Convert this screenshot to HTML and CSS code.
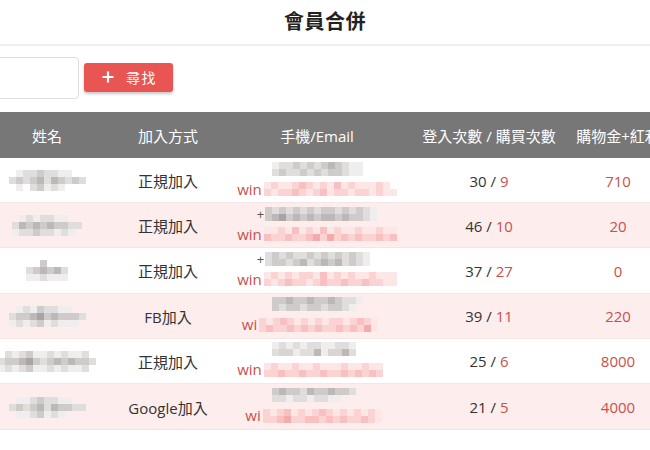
FILE: index.html
```html
<!DOCTYPE html>
<html lang="zh-Hant">
<head>
<meta charset="utf-8">
<title>會員合併</title>
<link rel="stylesheet" href="styles.css">
</head>
<body>
<header class="title-bar"><h1 class="title">會員合併</h1></header>
<div class="content">
  <div class="toolbar">
    <div class="search-input"></div>
    <button class="btn-find" type="button">
      <svg class="plus" width="12" height="12" viewBox="0 0 12 12"><path d="M6 0.5V11.5M0.5 6H11.5" stroke="#fff" stroke-width="2.2" fill="none"/></svg>
      <span>尋找</span>
    </button>
  </div>
  <div class="table">
    <div class="row head">
      <div class="cell">姓名</div>
      <div class="cell">加入方式</div>
      <div class="cell">手機/Email</div>
      <div class="cell">登入次數 / 購買次數</div>
      <div class="cell nowrap">購物金+紅利</div>
    </div>

    <div class="row">
      <div class="cell"><div class="mz c11"><i class="o"></i><i class="a"></i><i class="b"></i><i class="b"></i><i class="c"></i><i class="b"></i><i class="b"></i><i class="a"></i><i class="a"></i><i class="o"></i><i class="o"></i><i class="b"></i><i class="c"></i><i class="b"></i><i class="c"></i><i class="d"></i><i class="b"></i><i class="d"></i><i class="c"></i><i class="b"></i><i class="c"></i><i class="b"></i><i class="o"></i><i class="a"></i><i class="o"></i><i class="b"></i><i class="c"></i><i class="a"></i><i class="b"></i><i class="a"></i><i class="o"></i><i class="o"></i><i class="o"></i></div></div>
      <div class="cell">正規加入</div>
      <div class="cell contact">
        <div class="line"><div class="mz c13"><i class="a"></i><i class="b"></i><i class="b"></i><i class="c"></i><i class="b"></i><i class="c"></i><i class="b"></i><i class="c"></i><i class="d"></i><i class="c"></i><i class="b"></i><i class="a"></i><i class="a"></i><i class="b"></i><i class="c"></i><i class="b"></i><i class="b"></i><i class="c"></i><i class="b"></i><i class="c"></i><i class="b"></i><i class="c"></i><i class="c"></i><i class="b"></i><i class="a"></i><i class="a"></i></div></div>
        <div class="line"><span class="win">win</span><div class="mz c19 pk"><i class="p"></i><i class="q"></i><i class="p"></i><i class="p"></i><i class="q"></i><i class="r"></i><i class="q"></i><i class="p"></i><i class="q"></i><i class="p"></i><i class="r"></i><i class="p"></i><i class="q"></i><i class="p"></i><i class="p"></i><i class="p"></i><i class="q"></i><i class="p"></i><i class="o"></i><i class="q"></i><i class="p"></i><i class="q"></i><i class="q"></i><i class="r"></i><i class="q"></i><i class="p"></i><i class="q"></i><i class="r"></i><i class="p"></i><i class="q"></i><i class="q"></i><i class="p"></i><i class="q"></i><i class="q"></i><i class="p"></i><i class="q"></i><i class="p"></i><i class="p"></i></div></div>
      </div>
      <div class="cell">30 /&nbsp;<span class="red">9</span></div>
      <div class="cell red">710</div>
    </div>

    <div class="row pink">
      <div class="cell"><div class="mz c10"><i class="o"></i><i class="a"></i><i class="b"></i><i class="a"></i><i class="b"></i><i class="b"></i><i class="a"></i><i class="a"></i><i class="o"></i><i class="o"></i><i class="b"></i><i class="d"></i><i class="c"></i><i class="d"></i><i class="c"></i><i class="d"></i><i class="c"></i><i class="c"></i><i class="b"></i><i class="b"></i><i class="a"></i><i class="b"></i><i class="b"></i><i class="c"></i><i class="b"></i><i class="b"></i><i class="a"></i><i class="b"></i><i class="a"></i><i class="o"></i></div></div>
      <div class="cell">正規加入</div>
      <div class="cell contact">
        <div class="line"><span class="plus-t">+</span><div class="mz c16"><i class="c"></i><i class="b"></i><i class="c"></i><i class="b"></i><i class="c"></i><i class="b"></i><i class="c"></i><i class="b"></i><i class="c"></i><i class="c"></i><i class="b"></i><i class="c"></i><i class="b"></i><i class="c"></i><i class="b"></i><i class="a"></i><i class="c"></i><i class="d"></i><i class="e"></i><i class="c"></i><i class="d"></i><i class="c"></i><i class="d"></i><i class="c"></i><i class="d"></i><i class="d"></i><i class="c"></i><i class="d"></i><i class="c"></i><i class="c"></i><i class="b"></i><i class="a"></i></div></div>
        <div class="line"><span class="win">win</span><div class="mz c19 pk"><i class="p"></i><i class="p"></i><i class="q"></i><i class="p"></i><i class="r"></i><i class="p"></i><i class="q"></i><i class="p"></i><i class="r"></i><i class="p"></i><i class="q"></i><i class="p"></i><i class="p"></i><i class="q"></i><i class="p"></i><i class="p"></i><i class="q"></i><i class="p"></i><i class="p"></i><i class="r"></i><i class="q"></i><i class="q"></i><i class="r"></i><i class="q"></i><i class="q"></i><i class="r"></i><i class="s"></i><i class="q"></i><i class="s"></i><i class="q"></i><i class="r"></i><i class="q"></i><i class="r"></i><i class="q"></i><i class="q"></i><i class="r"></i><i class="q"></i><i class="r"></i></div></div>
      </div>
      <div class="cell">46 /&nbsp;<span class="red">10</span></div>
      <div class="cell red">20</div>
    </div>

    <div class="row">
      <div class="cell"><div class="mz c6"><i class="o"></i><i class="o"></i><i class="c"></i><i class="o"></i><i class="o"></i><i class="o"></i><i class="b"></i><i class="c"></i><i class="d"></i><i class="c"></i><i class="d"></i><i class="b"></i><i class="a"></i><i class="a"></i><i class="b"></i><i class="a"></i><i class="a"></i><i class="a"></i></div></div>
      <div class="cell">正規加入</div>
      <div class="cell contact">
        <div class="line"><span class="plus-t">+</span><div class="mz c16"><i class="b"></i><i class="c"></i><i class="b"></i><i class="c"></i><i class="b"></i><i class="b"></i><i class="c"></i><i class="b"></i><i class="c"></i><i class="b"></i><i class="c"></i><i class="b"></i><i class="c"></i><i class="b"></i><i class="a"></i><i class="o"></i><i class="b"></i><i class="c"></i><i class="c"></i><i class="b"></i><i class="c"></i><i class="d"></i><i class="b"></i><i class="c"></i><i class="d"></i><i class="c"></i><i class="d"></i><i class="b"></i><i class="c"></i><i class="b"></i><i class="a"></i><i class="o"></i></div></div>
        <div class="line"><span class="win">win</span><div class="mz c19 pk"><i class="p"></i><i class="q"></i><i class="p"></i><i class="q"></i><i class="p"></i><i class="q"></i><i class="q"></i><i class="p"></i><i class="r"></i><i class="p"></i><i class="q"></i><i class="p"></i><i class="q"></i><i class="p"></i><i class="p"></i><i class="q"></i><i class="p"></i><i class="p"></i><i class="p"></i><i class="q"></i><i class="p"></i><i class="q"></i><i class="r"></i><i class="q"></i><i class="q"></i><i class="p"></i><i class="q"></i><i class="r"></i><i class="q"></i><i class="q"></i><i class="r"></i><i class="q"></i><i class="q"></i><i class="r"></i><i class="q"></i><i class="q"></i><i class="p"></i><i class="p"></i></div></div>
      </div>
      <div class="cell">37 /&nbsp;<span class="red">27</span></div>
      <div class="cell red">0</div>
    </div>

    <div class="row pink">
      <div class="cell"><div class="mz c11"><i class="o"></i><i class="a"></i><i class="b"></i><i class="a"></i><i class="c"></i><i class="b"></i><i class="b"></i><i class="a"></i><i class="a"></i><i class="o"></i><i class="o"></i><i class="b"></i><i class="c"></i><i class="c"></i><i class="d"></i><i class="e"></i><i class="c"></i><i class="d"></i><i class="c"></i><i class="c"></i><i class="c"></i><i class="b"></i><i class="a"></i><i class="b"></i><i class="a"></i><i class="b"></i><i class="c"></i><i class="a"></i><i class="b"></i><i class="a"></i><i class="a"></i><i class="a"></i><i class="o"></i></div></div>
      <div class="cell">FB加入</div>
      <div class="cell contact">
        <div class="line"><div class="mz c13"><i class="c"></i><i class="c"></i><i class="d"></i><i class="c"></i><i class="c"></i><i class="d"></i><i class="c"></i><i class="c"></i><i class="d"></i><i class="c"></i><i class="b"></i><i class="b"></i><i class="a"></i><i class="c"></i><i class="b"></i><i class="c"></i><i class="c"></i><i class="b"></i><i class="c"></i><i class="c"></i><i class="b"></i><i class="c"></i><i class="c"></i><i class="b"></i><i class="a"></i><i class="o"></i></div></div>
        <div class="line"><span class="win">wi</span><div class="mz c19 pk"><i class="q"></i><i class="p"></i><i class="q"></i><i class="r"></i><i class="q"></i><i class="p"></i><i class="q"></i><i class="p"></i><i class="q"></i><i class="p"></i><i class="q"></i><i class="q"></i><i class="p"></i><i class="q"></i><i class="r"></i><i class="q"></i><i class="p"></i><i class="o"></i><i class="o"></i><i class="q"></i><i class="r"></i><i class="q"></i><i class="q"></i><i class="r"></i><i class="q"></i><i class="r"></i><i class="q"></i><i class="r"></i><i class="q"></i><i class="q"></i><i class="r"></i><i class="q"></i><i class="r"></i><i class="q"></i><i class="s"></i><i class="p"></i><i class="o"></i><i class="o"></i></div></div>
      </div>
      <div class="cell">39 /&nbsp;<span class="red">11</span></div>
      <div class="cell red">220</div>
    </div>

    <div class="row">
      <div class="cell"><div class="mz c14"><i class="o"></i><i class="b"></i><i class="a"></i><i class="b"></i><i class="c"></i><i class="a"></i><i class="a"></i><i class="b"></i><i class="a"></i><i class="b"></i><i class="a"></i><i class="a"></i><i class="b"></i><i class="o"></i><i class="b"></i><i class="c"></i><i class="c"></i><i class="d"></i><i class="e"></i><i class="c"></i><i class="b"></i><i class="c"></i><i class="d"></i><i class="c"></i><i class="d"></i><i class="c"></i><i class="c"></i><i class="b"></i><i class="a"></i><i class="b"></i><i class="a"></i><i class="b"></i><i class="c"></i><i class="a"></i><i class="a"></i><i class="b"></i><i class="a"></i><i class="b"></i><i class="a"></i><i class="a"></i><i class="b"></i><i class="o"></i></div></div>
      <div class="cell">正規加入</div>
      <div class="cell contact">
        <div class="line"><div class="mz c13 lt"><i class="a"></i><i class="b"></i><i class="a"></i><i class="b"></i><i class="a"></i><i class="b"></i><i class="b"></i><i class="a"></i><i class="a"></i><i class="b"></i><i class="b"></i><i class="a"></i><i class="o"></i><i class="b"></i><i class="c"></i><i class="c"></i><i class="a"></i><i class="b"></i><i class="b"></i><i class="d"></i><i class="a"></i><i class="c"></i><i class="c"></i><i class="d"></i><i class="b"></i><i class="o"></i></div></div>
        <div class="line"><span class="win">win</span><div class="mz c19 pk"><i class="p"></i><i class="q"></i><i class="p"></i><i class="p"></i><i class="q"></i><i class="p"></i><i class="p"></i><i class="q"></i><i class="p"></i><i class="p"></i><i class="p"></i><i class="q"></i><i class="p"></i><i class="p"></i><i class="q"></i><i class="p"></i><i class="p"></i><i class="o"></i><i class="o"></i><i class="q"></i><i class="q"></i><i class="r"></i><i class="q"></i><i class="q"></i><i class="r"></i><i class="q"></i><i class="q"></i><i class="r"></i><i class="q"></i><i class="q"></i><i class="r"></i><i class="q"></i><i class="r"></i><i class="q"></i><i class="r"></i><i class="q"></i><i class="o"></i><i class="o"></i></div></div>
      </div>
      <div class="cell">25 /&nbsp;<span class="red">6</span></div>
      <div class="cell red">8000</div>
    </div>

    <div class="row pink">
      <div class="cell"><div class="mz c11"><i class="o"></i><i class="a"></i><i class="a"></i><i class="b"></i><i class="c"></i><i class="b"></i><i class="b"></i><i class="a"></i><i class="a"></i><i class="o"></i><i class="o"></i><i class="b"></i><i class="c"></i><i class="b"></i><i class="c"></i><i class="d"></i><i class="b"></i><i class="d"></i><i class="c"></i><i class="c"></i><i class="b"></i><i class="b"></i><i class="o"></i><i class="a"></i><i class="a"></i><i class="b"></i><i class="c"></i><i class="a"></i><i class="b"></i><i class="a"></i><i class="o"></i><i class="o"></i><i class="o"></i></div></div>
      <div class="cell">Google加入</div>
      <div class="cell contact">
        <div class="line"><div class="mz c13"><i class="c"></i><i class="d"></i><i class="c"></i><i class="c"></i><i class="b"></i><i class="d"></i><i class="c"></i><i class="c"></i><i class="d"></i><i class="c"></i><i class="c"></i><i class="b"></i><i class="o"></i><i class="b"></i><i class="b"></i><i class="a"></i><i class="b"></i><i class="b"></i><i class="a"></i><i class="b"></i><i class="b"></i><i class="a"></i><i class="a"></i><i class="o"></i><i class="o"></i><i class="o"></i></div></div>
        <div class="line"><span class="win">wi</span><div class="mz c18 pk"><i class="q"></i><i class="p"></i><i class="q"></i><i class="r"></i><i class="p"></i><i class="q"></i><i class="p"></i><i class="q"></i><i class="r"></i><i class="q"></i><i class="p"></i><i class="q"></i><i class="p"></i><i class="q"></i><i class="p"></i><i class="q"></i><i class="p"></i><i class="o"></i><i class="q"></i><i class="q"></i><i class="r"></i><i class="s"></i><i class="q"></i><i class="q"></i><i class="r"></i><i class="r"></i><i class="q"></i><i class="r"></i><i class="q"></i><i class="r"></i><i class="q"></i><i class="q"></i><i class="r"></i><i class="q"></i><i class="p"></i><i class="o"></i></div></div>
      </div>
      <div class="cell">21 /&nbsp;<span class="red">5</span></div>
      <div class="cell red">4000</div>
    </div>
  </div>
</div>
</body>
</html>
```

FILE: styles.css
```css
* { box-sizing: border-box; }
html, body { margin: 0; padding: 0; background: #fff; }
body {
  font-family: "Open Sans", "Noto Sans CJK TC", sans-serif;
  color: #333;
  font-size: 15px;
  overflow: hidden;
  width: 650px;
  height: 450px;
}
.title-bar {
  height: 46px;
  border-bottom: 2px solid #eeeeee;
  display: flex;
  align-items: center;
  justify-content: center;
}
.title {
  margin: 0;
  font-family: "Noto Sans CJK TC", sans-serif;
  font-size: 20px;
  font-weight: 700;
  color: #222;
  letter-spacing: 0.5px;
  line-height: 1;
  padding-bottom: 2px;
}
.content {
  margin-left: -23px;
  width: 700px;
}
.toolbar {
  display: flex;
  align-items: center;
  gap: 5px;
  padding-top: 10px;
  height: 66px;
  padding-bottom: 13px;
}
.search-input {
  width: 102px;
  height: 42px;
  border: 1px solid #dedede;
  border-radius: 4px;
  background: #fff;
}
.btn-find {
  width: 89px;
  height: 29px;
  border: none;
  border-radius: 3px;
  background: #e85552;
  color: #fff;
  box-shadow: 0 2px 3px rgba(0,0,0,0.22);
  display: flex;
  align-items: center;
  justify-content: center;
  gap: 12px;
  padding: 0 0 0 2px;
  font-family: "Noto Sans CJK TC", sans-serif;
  font-size: 14px;
  letter-spacing: 1.5px;
  margin-top: -1px;
}
.plus { display: block; }
.table {
  width: 696px;
  border-bottom: 1px solid #e6e6e6;
}
.row {
  display: grid;
  grid-template-columns: 140px 102px 196px 148px 110px;
  height: 45.2px;
  border-bottom: 1px solid #f2e6e6;
}
.row.head {
  height: 46px;
  background: #777777;
  color: #fff;
  border-bottom: none;
}
.row.pink { background: #fdeded; }
.row:last-child { border-bottom: none; }
.cell {
  display: flex;
  align-items: center;
  justify-content: center;
  white-space: nowrap;
  padding-top: 1px;
}
.nowrap { white-space: nowrap; }
.red { color: #c9504c; }
.contact {
  flex-direction: column;
  gap: 3px;
  padding-top: 0;
  padding-bottom: 2px;
}
.line {
  display: flex;
  align-items: center;
  height: 17px;
}
.win {
  color: #c9504c;
  font-size: 15px;
  line-height: 17px;
  margin-right: 2px;
}
.plus-t {
  color: #555;
  font-size: 13px;
  line-height: 14px;
  margin-right: 1px;
}
.mz {
  display: grid;
  grid-auto-rows: 7px;
}
.contact .line:first-child .mz { margin-bottom: 1px; }
.c6 { grid-template-columns: repeat(6, 7px); }
.c10 { grid-template-columns: repeat(10, 7px); }
.c11 { grid-template-columns: repeat(11, 7px); }
.c13 { grid-template-columns: repeat(13, 7px); }
.c14 { grid-template-columns: repeat(14, 7px); }
.c16 { grid-template-columns: repeat(16, 7px); }
.c18 { grid-template-columns: repeat(18, 7px); }
.c19 { grid-template-columns: repeat(19, 7px); }
.mz i { display: block; }
.mz .o { background: transparent; }
.mz .a { background: #efeded; }
.mz .b { background: #e0dddd; }
.mz .c { background: #cfcbcb; }
.mz .d { background: #bdb8b8; }
.mz .e { background: #a9a3a3; }
.mz.lt .c { background: #d8d5d5; }
.mz .p { background: #fde6e6; }
.mz .q { background: #fbd3d3; }
.mz .r { background: #f8c0c0; }
.mz .s { background: #f4abab; }
```
